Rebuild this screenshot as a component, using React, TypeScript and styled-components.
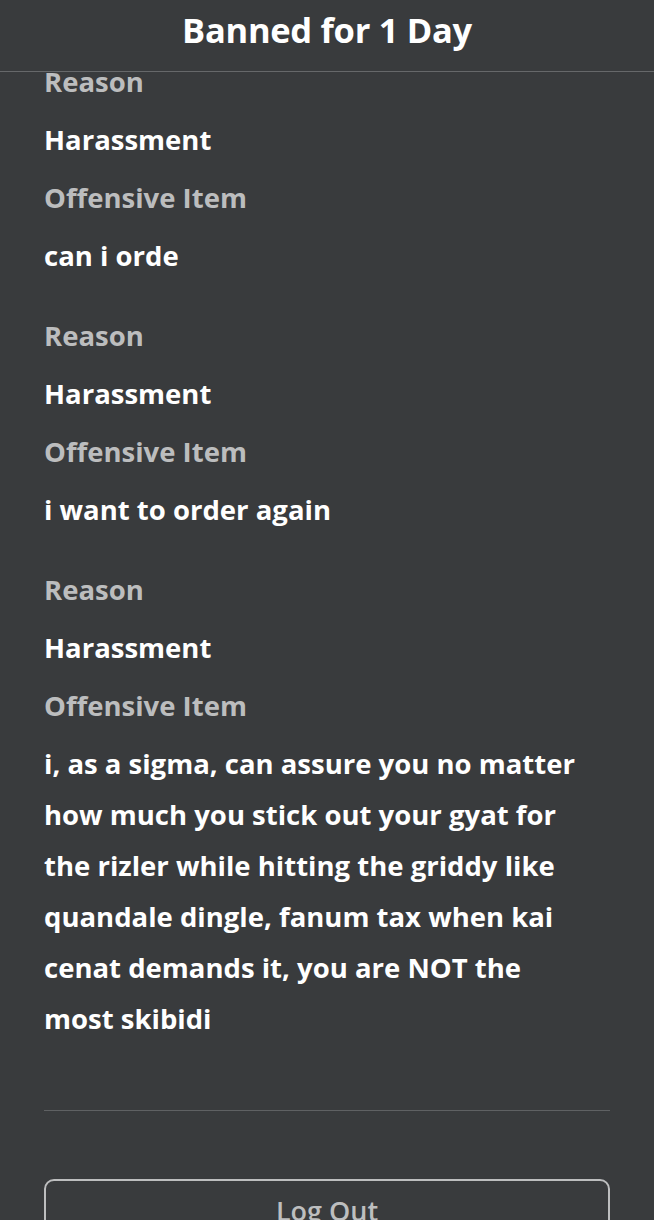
import React, { useEffect, useRef } from "react";
import styled, { createGlobalStyle } from "styled-components";

type Ban = {
  reason: string;
  item: string;
};

const bans: Ban[] = [
  { reason: "Harassment", item: "can i orde" },
  { reason: "Harassment", item: "i want to order again" },
  {
    reason: "Harassment",
    item: "i, as a sigma, can assure you no matter how much you stick out your gyat for the rizler while hitting the griddy like quandale dingle, fanum tax when kai cenat demands it, you are NOT the most skibidi",
  },
];

export default function App() {
  const scrollRef = useRef<HTMLDivElement>(null);

  useEffect(() => {
    if (scrollRef.current) scrollRef.current.scrollTop = 40;
  }, []);

  return (
    <>
      <GlobalStyle />
      <Screen>
        <Header>
          <Title>Banned for 1 Day</Title>
        </Header>
        <Scroll ref={scrollRef}>
          <Content>
            <BanList>
              {bans.map((ban, index) => (
                <BanGroup key={index}>
                  <Label>Reason</Label>
                  <Value>{ban.reason}</Value>
                  <Label>Offensive Item</Label>
                  <Value>{ban.item}</Value>
                </BanGroup>
              ))}
            </BanList>
            <Divider />
            <LogOutButton>Log Out</LogOutButton>
          </Content>
        </Scroll>
      </Screen>
    </>
  );
}

const GlobalStyle = createGlobalStyle`
  html, body {
    margin: 0;
    padding: 0;
    background: #393b3d;
    overflow: hidden;
  }

  body {
    font-family: "Open Sans", "Noto Sans", sans-serif;
  }
`;

const Screen = styled.div`
  height: 100vh;
  display: flex;
  flex-direction: column;
  background: #393b3d;
  color: #ffffff;
`;

const Header = styled.header`
  flex: none;
  height: 71px;
  display: flex;
  align-items: center;
  justify-content: center;
  border-bottom: 1px solid #66686a;
`;

const Title = styled.h1`
  margin: 0 0 12px;
  font-size: 34.5px;
  font-weight: 700;
  letter-spacing: -0.3px;
`;

const Scroll = styled.div`
  flex: 1;
  overflow-y: auto;
  scrollbar-width: none;

  &::-webkit-scrollbar {
    display: none;
  }
`;

const Content = styled.div`
  padding: 24px 44px 40px;
  display: flex;
  flex-direction: column;
`;

const BanList = styled.div`
  display: flex;
  flex-direction: column;
  gap: 29px;
`;

const BanGroup = styled.section`
  display: flex;
  flex-direction: column;
  gap: 7px;
`;

const Label = styled.div`
  font-size: 27.5px;
  line-height: 51px;
  font-weight: 700;
  color: #bcbdbe;
`;

const Value = styled.div`
  max-width: 550px;
  font-size: 27.5px;
  line-height: 51px;
  font-weight: 700;
  color: #ffffff;
`;

const Divider = styled.hr`
  margin: 66px 0 0;
  border: none;
  height: 1px;
  background: #5f6163;
`;

const LogOutButton = styled.button`
  margin-top: 68px;
  height: 62px;
  border: 2px solid #bdbebf;
  border-radius: 10px;
  background: transparent;
  color: #bdbebf;
  font-family: "Open Sans", "Noto Sans", sans-serif;
  font-size: 27px;
  font-weight: 600;
`;
